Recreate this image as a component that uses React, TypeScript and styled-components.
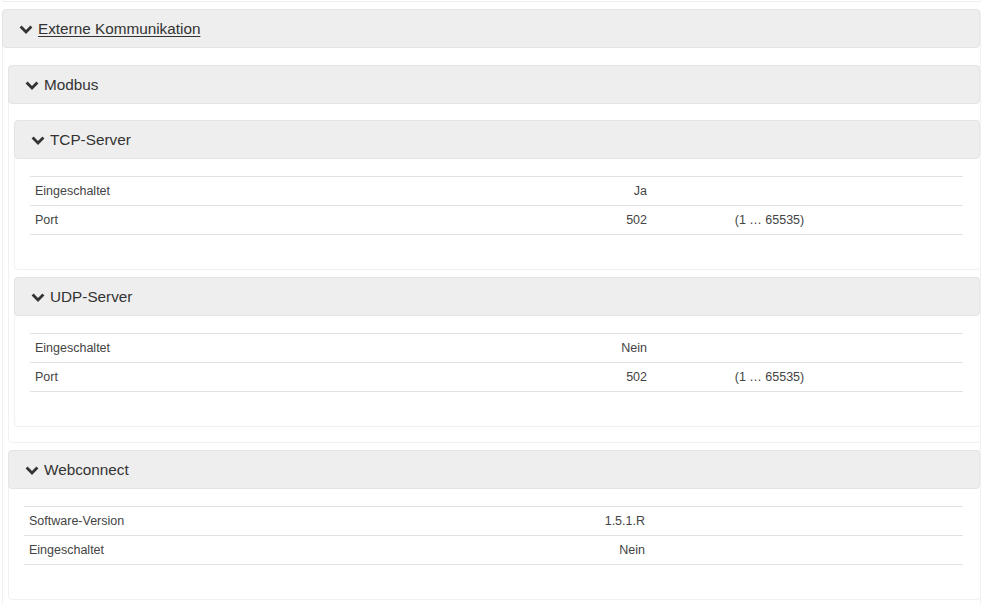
import React from 'react';
import styled, { createGlobalStyle } from 'styled-components';

const GlobalStyle = createGlobalStyle`
	html, body {
		margin: 0;
		padding: 0;
		background: #fff;
		overflow: hidden;
	}
	body {
		font-family: 'Liberation Sans', Arial, Helvetica, sans-serif;
		color: #333;
	}
`;

type Row = { label: string; value: string; range?: string };

const TCP_ROWS: Row[] = [
	{ label: 'Eingeschaltet', value: 'Ja' },
	{ label: 'Port', value: '502', range: '(1 … 65535)' },
];

const UDP_ROWS: Row[] = [
	{ label: 'Eingeschaltet', value: 'Nein' },
	{ label: 'Port', value: '502', range: '(1 … 65535)' },
];

const WEBCONNECT_ROWS: Row[] = [
	{ label: 'Software-Version', value: '1.5.1.R' },
	{ label: 'Eingeschaltet', value: 'Nein' },
];

function Chevron() {
	return (
		<ChevronIcon width="14" height="9" viewBox="0 0 14 9">
			<path d="M1.6 1.6 L7 7 L12.4 1.6" fill="none" stroke="#333" strokeWidth="2.8" />
		</ChevronIcon>
	);
}

function Panel({
	title,
	link,
	nested,
	children,
}: {
	title: string;
	link?: boolean;
	nested?: boolean;
	children: React.ReactNode;
}) {
	return (
		<PanelBox $nested={nested}>
			<PanelHeader>
				<Chevron />
				<PanelTitle $link={link}>{title}</PanelTitle>
			</PanelHeader>
			{children}
		</PanelBox>
	);
}

function ParamTable({ rows }: { rows: Row[] }) {
	return (
		<TableBody>
			<Table>
				{rows.map((row) => (
					<TableRow key={row.label}>
						<Cell>{row.label}</Cell>
						<ValueCell>{row.value}</ValueCell>
						<Cell />
						<Cell>{row.range}</Cell>
					</TableRow>
				))}
			</Table>
		</TableBody>
	);
}

export default function App() {
	return (
		<>
			<GlobalStyle />
			<Page>
				<PrevPanelEdge />
				<Panel title="Externe Kommunikation" link>
					<GroupBody $top={17}>
						<Panel title="Modbus" nested>
							<GroupBody $top={16} $bottom={15}>
								<Panel title="TCP-Server" nested>
									<ParamTable rows={TCP_ROWS} />
								</Panel>
								<Panel title="UDP-Server" nested>
									<ParamTable rows={UDP_ROWS} />
								</Panel>
							</GroupBody>
						</Panel>
						<Panel title="Webconnect" nested>
							<ParamTable rows={WEBCONNECT_ROWS} />
						</Panel>
					</GroupBody>
				</Panel>
			</Page>
		</>
	);
}

const Page = styled.div`
	width: 979px;
	margin-left: 2px;
	height: 604px;
`;

const PrevPanelEdge = styled.div`
	height: 1px;
	border: 1px solid #eeeeee;
	border-top: none;
	border-radius: 0 0 4px 4px;
`;

const PanelBox = styled.section<{ $nested?: boolean }>`
	margin-top: 7px;
	margin-right: ${({ $nested }) => ($nested ? -1 : 0)}px;
	border: 1px solid #f1f1f1;
	border-radius: 4px;
	background: #fff;
`;

const PanelHeader = styled.header`
	display: flex;
	align-items: center;
	gap: 5px;
	box-sizing: border-box;
	height: 39px;
	margin: -1px 0 0 -1px;
	padding-left: 16px;
	background: #eeeeee;
	border: 1px solid #e4e4e4;
	border-radius: 4px;
`;

const ChevronIcon = styled.svg`
	display: block;
	flex: none;
	margin-top: 1px;
`;

const PanelTitle = styled.span<{ $link?: boolean }>`
	font-size: 15.3px;
	color: #333;
	text-decoration: ${({ $link }) => ($link ? 'underline' : 'none')};
	text-underline-offset: 2px;
`;

const GroupBody = styled.div<{ $top: number; $bottom?: number }>`
	padding: ${({ $top }) => $top}px 0 ${({ $bottom }) => $bottom ?? 40}px 5px;

	& > section:first-child {
		margin-top: 0;
	}
`;

const TableBody = styled.div`
	padding: 17px 17px 34px 15px;
`;

const Table = styled.div`
	border-top: 1px solid #e2e2e2;
`;

const TableRow = styled.div`
	display: grid;
	grid-template-columns: 50% 16.667% 8.333% 25%;
	height: 28px;
	align-items: center;
	border-bottom: 1px solid #e2e2e2;
	font-size: 12.5px;
	color: #444;
`;

const Cell = styled.div`
	padding: 0 5px;
	white-space: nowrap;
`;

const ValueCell = styled(Cell)`
	text-align: right;
`;
